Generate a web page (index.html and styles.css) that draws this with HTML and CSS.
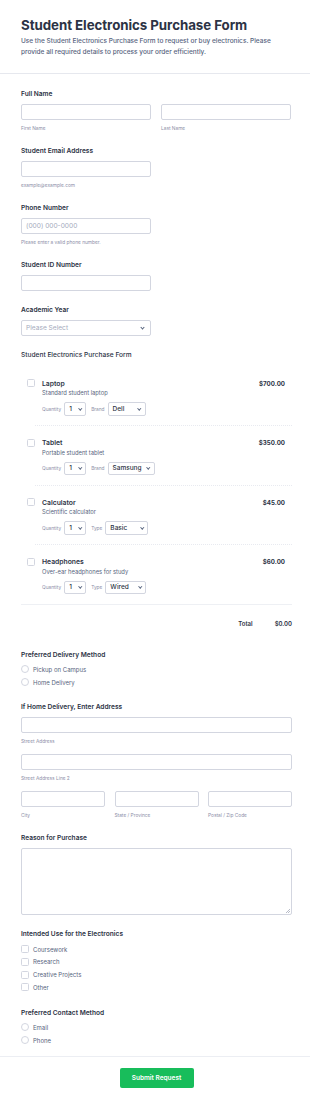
FILE: index.html
```html
<!DOCTYPE html>
<html lang="en">
<head>
<meta charset="utf-8">
<title>Student Electronics Purchase Form</title>
<link rel="stylesheet" href="styles.css">
</head>
<body>
<div class="page">
  <header class="header">
    <h1 class="title">Student Electronics Purchase Form</h1>
    <p class="subtitle">Use the Student Electronics Purchase Form to request or buy electronics. Please provide all required details to process your order efficiently.</p>
  </header>

  <form class="form">
    <div class="field">
      <div class="label">Full Name</div>
      <div class="cols2">
        <div><div class="input"></div><div class="sub">First Name</div></div>
        <div><div class="input"></div><div class="sub">Last Name</div></div>
      </div>
    </div>

    <div class="field">
      <div class="label">Student Email Address</div>
      <div class="half"><div class="input"></div><div class="sub">example@example.com</div></div>
    </div>

    <div class="field">
      <div class="label">Phone Number</div>
      <div class="half"><div class="input placeholder">(000) 000-0000</div><div class="sub">Please enter a valid phone number.</div></div>
    </div>

    <div class="field">
      <div class="label">Student ID Number</div>
      <div class="half"><div class="input"></div></div>
    </div>

    <div class="field">
      <div class="label">Academic Year</div>
      <div class="half"><div class="input select placeholder">Please Select<span class="chev"></span></div></div>
    </div>

    <div class="field products">
      <div class="label plain">Student Electronics Purchase Form</div>
      <div class="plist">
        <div class="item">
          <span class="box"></span>
          <div class="info">
            <div class="ptop"><span class="pname">Laptop</span><span class="price">$700.00</span></div>
            <div class="pdesc">Standard student laptop</div>
            <div class="opts">
              <span class="olabel">Quantity</span><span class="sel q">1<span class="chev"></span></span>
              <span class="olabel">Brand</span><span class="sel w38">Dell<span class="chev"></span></span>
            </div>
          </div>
        </div>
        <div class="item">
          <span class="box"></span>
          <div class="info">
            <div class="ptop"><span class="pname">Tablet</span><span class="price">$350.00</span></div>
            <div class="pdesc">Portable student tablet</div>
            <div class="opts">
              <span class="olabel">Quantity</span><span class="sel q">1<span class="chev"></span></span>
              <span class="olabel">Brand</span><span class="sel w47">Samsung<span class="chev"></span></span>
            </div>
          </div>
        </div>
        <div class="item">
          <span class="box"></span>
          <div class="info">
            <div class="ptop"><span class="pname">Calculator</span><span class="price">$45.00</span></div>
            <div class="pdesc">Scientific calculator</div>
            <div class="opts">
              <span class="olabel">Quantity</span><span class="sel q">1<span class="chev"></span></span>
              <span class="olabel">Type</span><span class="sel w43">Basic<span class="chev"></span></span>
            </div>
          </div>
        </div>
        <div class="item">
          <span class="box"></span>
          <div class="info">
            <div class="ptop"><span class="pname">Headphones</span><span class="price">$60.00</span></div>
            <div class="pdesc">Over-ear headphones for study</div>
            <div class="opts">
              <span class="olabel">Quantity</span><span class="sel q">1<span class="chev"></span></span>
              <span class="olabel">Type</span><span class="sel w41">Wired<span class="chev"></span></span>
            </div>
          </div>
        </div>
      </div>
      <div class="total"><span class="tlabel">Total</span><span class="tval">$0.00</span></div>
    </div>

    <div class="field">
      <div class="label">Preferred Delivery Method</div>
      <div class="choices">
        <div class="choice"><span class="radio"></span>Pickup on Campus</div>
        <div class="choice"><span class="radio"></span>Home Delivery</div>
      </div>
    </div>

    <div class="field">
      <div class="label">If Home Delivery, Enter Address</div>
      <div class="arow"><div class="input"></div><div class="sub">Street Address</div></div>
      <div class="arow"><div class="input"></div><div class="sub">Street Address Line 2</div></div>
      <div class="cols3">
        <div><div class="input"></div><div class="sub">City</div></div>
        <div><div class="input"></div><div class="sub">State / Province</div></div>
        <div><div class="input"></div><div class="sub">Postal / Zip Code</div></div>
      </div>
    </div>

    <div class="field">
      <div class="label">Reason for Purchase</div>
      <div class="textarea"><span class="grip"></span></div>
    </div>

    <div class="field">
      <div class="label">Intended Use for the Electronics</div>
      <div class="choices">
        <div class="choice"><span class="check"></span>Coursework</div>
        <div class="choice"><span class="check"></span>Research</div>
        <div class="choice"><span class="check"></span>Creative Projects</div>
        <div class="choice"><span class="check"></span>Other</div>
      </div>
    </div>

    <div class="field last">
      <div class="label">Preferred Contact Method</div>
      <div class="choices">
        <div class="choice"><span class="radio"></span>Email</div>
        <div class="choice"><span class="radio"></span>Phone</div>
      </div>
    </div>
  </form>

  <div class="footer">
    <button class="submit" type="button">Submit Request</button>
  </div>
</div>
</body>
</html>
```

FILE: styles.css
```css
* { box-sizing: border-box; }
html, body { margin: 0; padding: 0; background: #fff; }
body { font-family: Inter, "Noto Sans", sans-serif; color: #2c3345; }

.page { width: 310px; }

.header {
  padding: 17px 21px 15px;
  border-bottom: 1px solid #e6e8ee;
}
.title {
  margin: 0;
  font-size: 13.3px;
  line-height: 17px;
  font-weight: 700;
  color: #2c3345;
  letter-spacing: -0.05px;
}
.subtitle {
  margin: 2px 0 0;
  font-size: 6.5px;
  line-height: 11px;
  color: #57647e;
  font-weight: 500;
}

.form { padding: 15px 18px 9px 21px; }

.field { margin-bottom: 14px; }
.field.last { margin-bottom: 0; }

.label {
  font-size: 6.6px;
  line-height: 10px;
  font-weight: 600;
  color: #2c3345;
  margin-bottom: 5px;
}
.label.plain { font-weight: 500; }

.cols2 { display: grid; grid-template-columns: 130px 130px; column-gap: 10px; }
.half { width: 130px; }
.cols3 { display: grid; grid-template-columns: 1fr 1fr 1fr; column-gap: 9.5px; }
.arow { margin-bottom: 9px; }

.input {
  height: 16px;
  border: 1px solid #d3d6e0;
  border-radius: 2px;
  background: #fff;
  display: flex;
  align-items: center;
  padding: 0 4px;
  font-size: 6.6px;
  color: #2c3345;
}
.input.placeholder { color: #a5abbd; }
.input.select { justify-content: space-between; }

.chev {
  display: inline-block;
  width: 3px;
  height: 3px;
  border-right: 0.8px solid #57647e;
  border-bottom: 0.8px solid #57647e;
  transform: rotate(45deg);
  margin-top: -2px;
  margin-right: 2px;
}

.sub {
  margin-top: 4px;
  font-size: 4.8px;
  line-height: 8px;
  color: #8d8fa8;
}

/* products */
.plist { margin-top: 6.5px; border-bottom: 1px solid #eef0f4; }
.item {
  display: flex;
  margin-left: 14px;
  padding: 11.5px 0 9.5px;
  border-bottom: 1px dotted #e8eaf0;
}
.item:last-child { border-bottom: none; }
.box {
  flex: none;
  width: 8px;
  height: 8px;
  margin-left: -8px;
  margin-top: 1px;
  margin-right: 7px;
  border: 1px solid #d3d6e0;
  border-radius: 1.5px;
  background: #fff;
}
.info { flex: 1; }
.ptop { display: flex; justify-content: space-between; align-items: center; padding-right: 7px; height: 10px; }
.pname { font-size: 6.8px; font-weight: 600; color: #2c3345; }
.price { font-size: 6.2px; font-weight: 700; color: #2c3345; }
.pdesc { font-size: 5.8px; line-height: 10px; color: #57647e; }
.opts { display: flex; align-items: center; margin-top: 4px; height: 13.5px; }
.olabel { font-size: 4.8px; color: #8d8fa8; margin-right: 3px; }
.sel {
  height: 13.5px;
  border: 1px solid #d3d6e0;
  border-radius: 2px;
  display: inline-flex;
  align-items: center;
  justify-content: space-between;
  padding: 0 2px 0 4px;
  font-size: 6.5px;
  font-weight: 500;
  color: #2c3345;
  margin-right: 5px;
}
.sel .chev { width: 2.5px; height: 2.5px; margin-right: 2px; }
.sel.q { width: 22px; }
.w38 { width: 38px; }
.w47 { width: 47px; }
.w43 { width: 43px; }
.w41 { width: 41px; }

.total {
  display: flex;
  justify-content: flex-end;
  gap: 22px;
  padding-top: 14px;
  line-height: 10px;
  font-size: 6px;
  font-weight: 600;
  color: #2c3345;
}
.products { margin-bottom: 21px; }

/* choices */
.choices { margin-top: -1.5px; }
.choice {
  display: flex;
  align-items: center;
  height: 12.7px;
  font-size: 6px;
  color: #57647e;
}
.radio, .check {
  flex: none;
  width: 8px;
  height: 8px;
  margin-right: 4px;
  border: 1px solid #d3d6e0;
  background: #fff;
}
.radio { border-radius: 50%; }
.check { border-radius: 1.5px; }

.textarea {
  height: 67px;
  border: 1px solid #d3d6e0;
  border-radius: 2px;
  position: relative;
}
.grip {
  position: absolute;
  right: 1px;
  bottom: 1px;
  width: 4px;
  height: 4px;
  background: linear-gradient(135deg, transparent 45%, #b8bcc8 45%, #b8bcc8 55%, transparent 55%, transparent 70%, #b8bcc8 70%, #b8bcc8 80%, transparent 80%);
}

.footer {
  border-top: 1px solid #eceef3;
  padding: 11px 0 17px;
  display: flex;
  justify-content: center;
}
.submit {
  margin-left: 3px;
  width: 74px;
  height: 20px;
  border: none;
  border-radius: 2px;
  background: #18bd5b;
  color: #fff;
  font-family: Inter, "Noto Sans", sans-serif;
  font-size: 6.5px;
  font-weight: 600;
  padding: 0;
}
```
